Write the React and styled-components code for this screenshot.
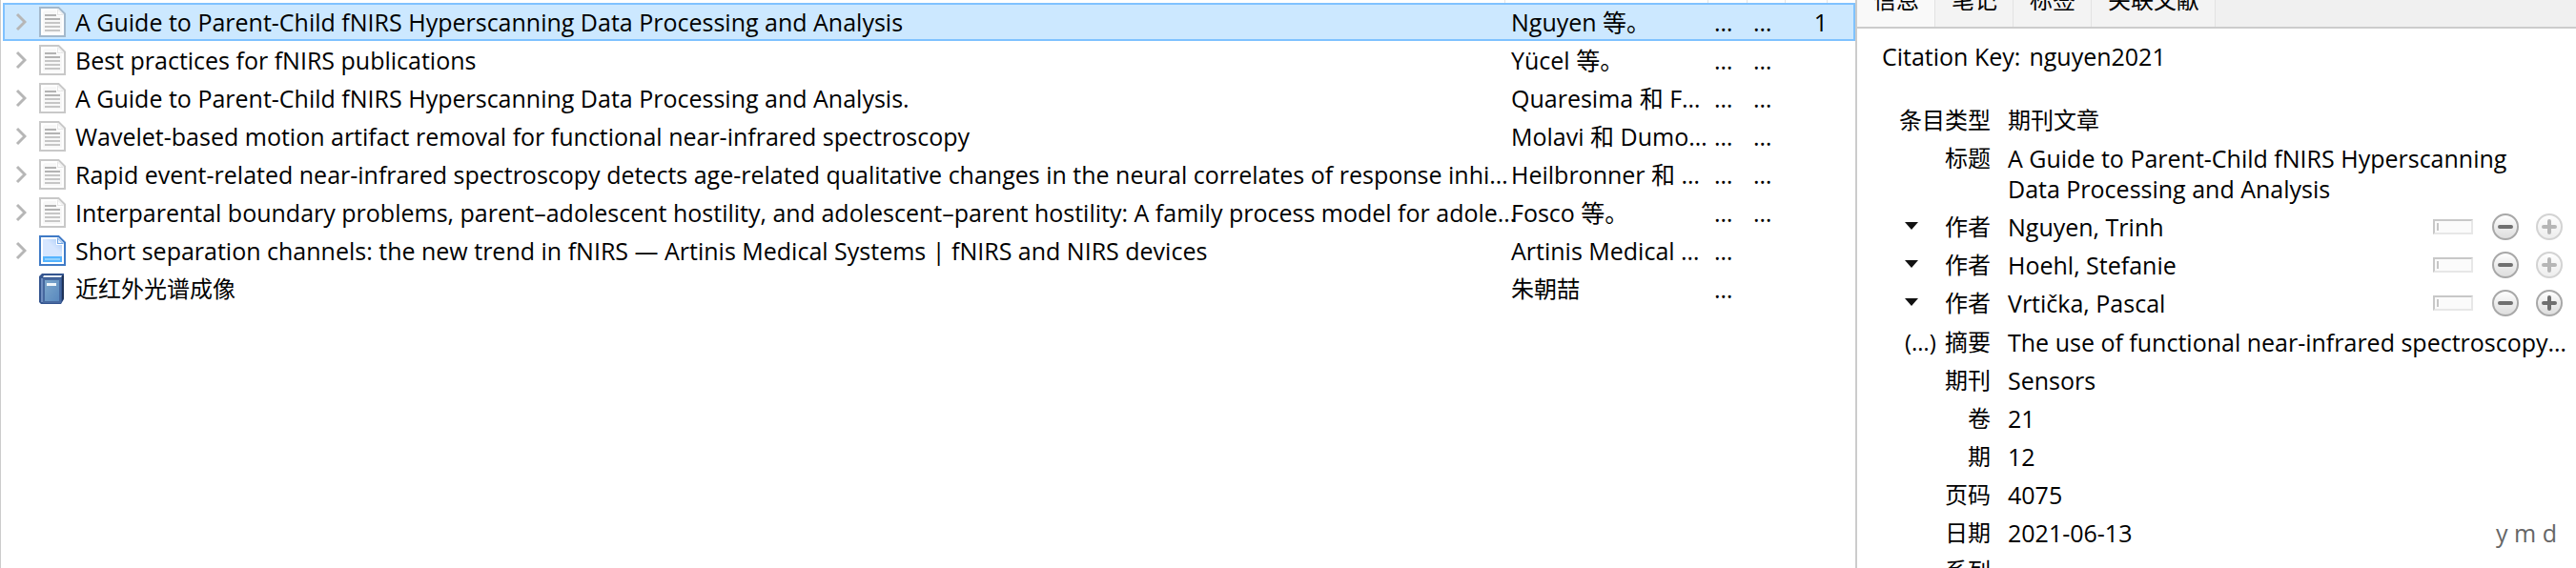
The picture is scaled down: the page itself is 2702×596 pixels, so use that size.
import React from "react";
import styled, { createGlobalStyle, css } from "styled-components";

const Global = createGlobalStyle`
  * { box-sizing: border-box; }
  body {
    margin: 0;
    background: #fff;
    color: #000;
    font-family: "Open Sans", "Noto Sans CJK SC", sans-serif;
    font-size: 25px;
    line-height: 32px;
  }
  button {
    font: inherit;
    color: inherit;
    border: 0;
    padding: 0;
    background: none;
  }
`;

const Shell = styled.div`
  display: grid;
  grid-template-columns: minmax(0, 1fr) 756px;
  height: 100vh;
  overflow: hidden;
`;

const ItemsPane = styled.main`
  border-left: 1px solid #ccc;
  padding: 0 0 0 2px;
`;

const ItemsTable = styled.table`
  width: 100%;
  table-layout: fixed;
  border-collapse: separate;
  border-spacing: 0;
`;

const Col = styled.col`
  width: ${(p) => (p.$w ? `${p.$w}px` : "auto")};
`;

const HeadCell = styled.th`
  height: 3px;
  padding: 0;
  border-right: 1px solid #e5e5e5;
  &:last-child { border-right: 0; }
`;

const ItemRow = styled.tr`
  ${(p) =>
    p.$selected &&
    css`
      background: #cce8ff;
      outline: 2px solid #7fc2ff;
      outline-offset: -2px;
    `}
`;

const Cell = styled.td`
  height: 40px;
  padding: 0 0 0 6px;
  white-space: nowrap;
  text-align: ${(p) => (p.$end ? "right" : "left")};
  font-size: ${(p) => (p.$cjk ? 24 : 25)}px;
`;

const TitleCell = styled(Cell)`
  padding-left: 13px;
`;

const TitleContent = styled.div`
  display: flex;
  align-items: center;
`;

const Twisty = styled.button`
  display: flex;
  width: 12px;
  height: 20px;
`;

const Leaf = styled.span`
  width: 12px;
`;

const IconBox = styled.span`
  display: flex;
  margin: 0 10px 0 13px;
`;

const DetailPane = styled.aside`
  border-left: 2px solid #ccc;
  overflow: hidden;
`;

const TabBar = styled.div`
  display: flex;
  align-items: flex-end;
  height: 30px;
  overflow: hidden;
  background: #f0f0f0;
  border-bottom: 2px solid #ccc;
`;

const Tab = styled.button`
  flex: none;
  height: 56px;
  padding: 0 16px 0 17px;
  border-right: 1px solid #e2e2e2;
  background: ${(p) => (p.$active ? "#f9f9f9" : "#f3f3f3")};
  font-size: 24px;
`;

const CitationKey = styled.p`
  display: flex;
  gap: 9px;
  margin: 13px 0 31px 26px;
`;

const Fields = styled.dl`
  margin: 0;
`;

const Creators = styled.div`
  padding-bottom: 1px;
`;

const Field = styled.div`
  display: grid;
  grid-template-columns: 96px minmax(0, 1fr) auto;
  column-gap: 18px;
  align-items: start;
  padding: 4px 14px 4px 44px;
`;

const Name = styled.dt`
  display: flex;
  font-size: 24px;
  white-space: nowrap;
`;

const Prefix = styled.span`
  padding-left: 6px;
`;

const Label = styled.span`
  margin-left: auto;
`;

const Value = styled.dd`
  margin: 0;
  font-size: ${(p) => (p.$cjk ? 24 : 25)}px;
  white-space: nowrap;
`;

const Line = styled.span`
  display: block;
`;

const DateHint = styled.span`
  padding-right: 6px;
  color: #666;
`;

const Controls = styled.div`
  display: flex;
  align-items: center;
  height: 32px;
`;

const MenuButton = styled.button`
  display: flex;
  align-items: center;
  width: 20px;
  height: 30px;
  padding-left: 6px;
`;

const ModeButton = styled.button`
  display: flex;
  width: 42px;
  height: 16px;
  margin-right: 20px;
  padding: 2px;
  border: 2px solid;
  border-color: #c8c8c8 #e7e7e7 #e7e7e7 #c8c8c8;
  background: #fbfbfb;
  &::before {
    content: "";
    width: 2px;
    height: 8px;
    background: #c6c6c6;
  }
`;

const RoundButton = styled.button`
  display: flex;
  width: 28px;
  height: 28px;
  opacity: ${(p) => (p.disabled ? 0.5 : 1)};
  & + & { margin-left: 18px; }
`;

const PageIcon = ({ selected }) => (
  <svg width="28" height="32" viewBox="0 0 28 32" aria-hidden="true">
    <path
      d="M1 1H20.5L27 7.5V31H1Z"
      fill="#fff"
      stroke={selected ? "#a3b8cc" : "#c8c8c8"}
      strokeWidth="2"
    />
    <path d="M6 4H18V10H24V28H4V6Z" fill="#f8f8f8" />
    <path d="M19 2V9H26Z" fill="#e6e6e6" />
    <path d="M20 4V8H24Z" fill="#fff" />
    <path d="M6 9H18M6 13H22" stroke="#b3b3b3" strokeWidth="2" />
    <path d="M6 17H22M6 21H22M6 25H22" stroke="#c6c6c6" strokeWidth="2" />
  </svg>
);

const WebPageIcon = () => (
  <svg width="28" height="32" viewBox="0 0 28 32" aria-hidden="true">
    <defs>
      <linearGradient id="web" x1="0" y1="1" x2="1" y2="0">
        <stop offset="0.55" stopColor="#d6e6ff" />
        <stop offset="1" stopColor="#a9cbf5" />
      </linearGradient>
    </defs>
    <path d="M1 1H20.5L27 7.5V31H1Z" fill="#fff" stroke="#3f7ac6" strokeWidth="2" />
    <path d="M4 4H18V10H24V22H4Z" fill="url(#web)" />
    <path d="M19 2V9H26Z" fill="#6fa5e6" />
    <path d="M20 4V8H24Z" fill="#e8f2ff" />
    <path d="M4 22H24V28H4Z" fill="#55b4ff" />
    <path d="M6 25H22" stroke="#92d2ff" strokeWidth="2" />
  </svg>
);

const BookIcon = () => (
  <svg width="28" height="34" viewBox="0 0 28 34" aria-hidden="true">
    <defs>
      <linearGradient id="book" x1="0" y1="0" x2="1" y2="1">
        <stop offset="0" stopColor="#7fa9cd" />
        <stop offset="1" stopColor="#5787bd" />
      </linearGradient>
    </defs>
    <path d="M3 1H26V28L23 33H2L0 31V4Z" fill="#34558f" />
    <path d="M5 3H24L23 5H4Z" fill="#e3ebf5" />
    <path d="M24 3H26V27L24 30Z" fill="#1f3358" />
    <path d="M2 6H4V31H2Z" fill="#6f8ec0" />
    <path d="M5 7H22V31H5Z" fill="url(#book)" stroke="#46689f" strokeWidth="2" />
    <path d="M8 11H18V14H8Z" fill="#eef5fb" />
  </svg>
);

const icons = { page: PageIcon, web: WebPageIcon, book: BookIcon };

const Chevron = () => (
  <svg width="12" height="20" viewBox="0 0 12 20" aria-hidden="true">
    <path d="M2 2L10 10L2 18" fill="none" stroke="#b6b6b6" strokeWidth="3" />
  </svg>
);

const Triangle = () => (
  <svg width="14" height="8" viewBox="0 0 14 8" aria-hidden="true">
    <path d="M0 0H14L7 8Z" fill="#111" />
  </svg>
);

const RoundGlyph = ({ plus }) => (
  <svg width="28" height="28" viewBox="0 0 28 28" aria-hidden="true">
    <defs>
      <linearGradient id="round" x1="0" y1="0" x2="0" y2="1">
        <stop offset="0" stopColor="#fff" />
        <stop offset="1" stopColor="#dcdcdc" />
      </linearGradient>
    </defs>
    <circle cx="14" cy="14" r="13" fill="url(#round)" stroke="#a8a8a8" strokeWidth="2" />
    <path
      d={plus ? "M8 14H20M14 8V20" : "M8 14H20"}
      stroke="#707070"
      strokeWidth="4"
      strokeLinecap="round"
    />
  </svg>
);

const items = [
  { icon: "page", title: "A Guide to Parent-Child fNIRS Hyperscanning Data Processing and Analysis", creator: "Nguyen 等。", a: "…", b: "…", count: "1", selected: true },
  { icon: "page", title: "Best practices for fNIRS publications", creator: "Yücel 等。", a: "…", b: "…" },
  { icon: "page", title: "A Guide to Parent-Child fNIRS Hyperscanning Data Processing and Analysis.", creator: "Quaresima 和 F…", a: "…", b: "…" },
  { icon: "page", title: "Wavelet-based motion artifact removal for functional near-infrared spectroscopy", creator: "Molavi 和 Dumo…", a: "…", b: "…" },
  { icon: "page", title: "Rapid event-related near-infrared spectroscopy detects age-related qualitative changes in the neural correlates of response inhi…", creator: "Heilbronner 和 …", a: "…", b: "…" },
  { icon: "page", title: "Interparental boundary problems, parent–adolescent hostility, and adolescent–parent hostility: A family process model for adole…", creator: "Fosco 等。", a: "…", b: "…" },
  { icon: "web", title: "Short separation channels: the new trend in fNIRS — Artinis Medical Systems | fNIRS and NIRS devices", creator: "Artinis Medical …", a: "…" },
  { icon: "book", title: "近红外光谱成像", creator: "朱朝喆", a: "…", leaf: true, cjk: true },
];

const creators = ["Nguyen, Trinh", "Hoehl, Stefanie", "Vrtička, Pascal"];

const Item = ({ item }) => {
  const Icon = icons[item.icon];
  return (
    <ItemRow $selected={item.selected} aria-selected={!!item.selected}>
      <TitleCell $cjk={item.cjk}>
        <TitleContent>
          {item.leaf ? <Leaf /> : <Twisty aria-label="展开"><Chevron /></Twisty>}
          <IconBox><Icon selected={item.selected} /></IconBox>
          {item.title}
        </TitleContent>
      </TitleCell>
      <Cell $cjk={item.cjk}>{item.creator}</Cell>
      <Cell>{item.a}</Cell>
      <Cell>{item.b}</Cell>
      <Cell $end>{item.count}</Cell>
      <Cell />
    </ItemRow>
  );
};

const Creator = ({ name, last }) => (
  <Field>
    <Name>
      <MenuButton aria-label="作者类型"><Triangle /></MenuButton>
      <Label>作者</Label>
    </Name>
    <Value>{name}</Value>
    <Controls>
      <ModeButton aria-label="切换为单字段" />
      <RoundButton aria-label="删除"><RoundGlyph /></RoundButton>
      <RoundButton aria-label="添加" disabled={!last}><RoundGlyph plus /></RoundButton>
    </Controls>
  </Field>
);

const Row = ({ label, prefix, cjk, hint, children }) => (
  <Field>
    <Name>
      {prefix && <Prefix>{prefix}</Prefix>}
      <Label>{label}</Label>
    </Name>
    <Value $cjk={cjk}>{children}</Value>
    {hint && <DateHint>{hint}</DateHint>}
  </Field>
);

export default function App() {
  return (
    <>
      <Global />
      <Shell>
        <ItemsPane>
          <ItemsTable>
            <colgroup>
              <Col />
              <Col $w={213} />
              <Col $w={41} />
              <Col $w={40} />
              <Col $w={44} />
              <Col $w={29} />
            </colgroup>
            <thead>
              <tr>
                {["标题", "创建者", "日期", "期刊", "附件", "列"].map((h) => (
                  <HeadCell key={h} aria-label={h} />
                ))}
              </tr>
            </thead>
            <tbody>
              {items.map((item, i) => <Item key={i} item={item} />)}
            </tbody>
          </ItemsTable>
        </ItemsPane>
        <DetailPane>
          <TabBar role="tablist">
            {["信息", "笔记", "标签", "关联文献"].map((t, i) => (
              <Tab key={t} role="tab" aria-selected={i === 0} $active={i === 0}>{t}</Tab>
            ))}
          </TabBar>
          <CitationKey>
            <span>Citation Key:</span>
            <span>nguyen2021</span>
          </CitationKey>
          <Fields>
            <Row label="条目类型" cjk>期刊文章</Row>
            <Row label="标题">
              <Line>A Guide to Parent-Child fNIRS Hyperscanning</Line>
              <Line>Data Processing and Analysis</Line>
            </Row>
            <Creators>
              {creators.map((name, i) => (
                <Creator key={name} name={name} last={i === creators.length - 1} />
              ))}
            </Creators>
            <Row label="摘要" prefix="(…)">The use of functional near-infrared spectroscopy…</Row>
            <Row label="期刊">Sensors</Row>
            <Row label="卷">21</Row>
            <Row label="期">12</Row>
            <Row label="页码">4075</Row>
            <Row label="日期" hint="y m d">2021-06-13</Row>
            <Row label="系列" />
          </Fields>
        </DetailPane>
      </Shell>
    </>
  );
}
